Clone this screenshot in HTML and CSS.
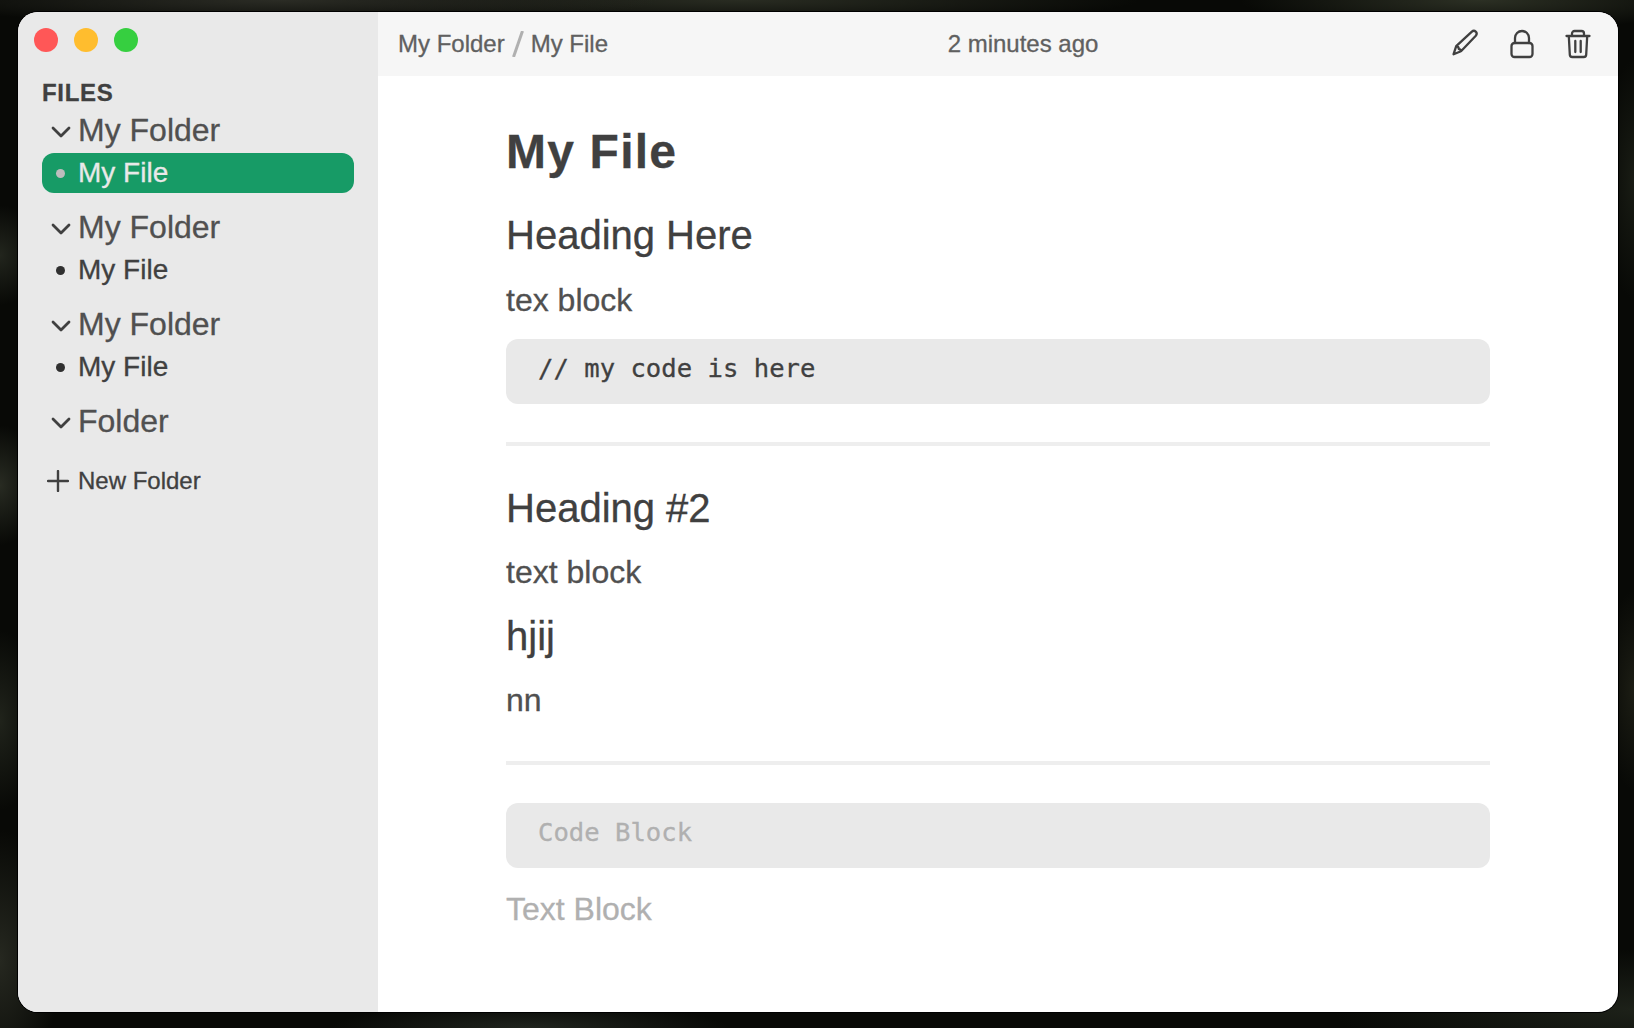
FILE: index.html
```html
<!DOCTYPE html>
<html lang="en">
<head>
<meta charset="utf-8">
<title>My File</title>
<link rel="stylesheet" href="styles.css">
</head>
<body>
<div class="window">
  <aside class="sidebar">
    <div class="lights"><span class="light close"></span><span class="light minimize"></span><span class="light expand"></span></div>
    <h2 class="files-title">FILES</h2>
    <nav class="tree">
      <section class="group">
        <div class="folder"><svg class="chevron" viewBox="0 0 20 12"><path d="M2 2l8 8 8-8"/></svg><span>My Folder</span></div>
        <div class="file selected"><i class="dot"></i><span>My File</span></div>
      </section>
      <section class="group">
        <div class="folder"><svg class="chevron" viewBox="0 0 20 12"><path d="M2 2l8 8 8-8"/></svg><span>My Folder</span></div>
        <div class="file"><i class="dot"></i><span>My File</span></div>
      </section>
      <section class="group">
        <div class="folder"><svg class="chevron" viewBox="0 0 20 12"><path d="M2 2l8 8 8-8"/></svg><span>My Folder</span></div>
        <div class="file"><i class="dot"></i><span>My File</span></div>
      </section>
      <section class="group">
        <div class="folder"><svg class="chevron" viewBox="0 0 20 12"><path d="M2 2l8 8 8-8"/></svg><span>Folder</span></div>
      </section>
    </nav>
    <div class="new-folder"><svg class="plus" viewBox="0 0 22 22"><path d="M11 1v20M1 11h20"/></svg><span>New Folder</span></div>
  </aside>
  <div class="main">
    <header class="toolbar">
      <div class="crumbs"><span>My Folder</span><svg class="slash" viewBox="0 0 12 26"><path d="M1.500 26L10.500 0"/></svg><span>My File</span></div>
      <time class="edited">2 minutes ago</time>
      <div class="actions">
        <svg class="icon pencil" viewBox="0 0 28 28"><path d="M2.600 25.200l2.600-8L20.600 2.800c3-2.600 6.600.8 4.200 3.900L10 22.200z M5.200 17.200c1.600.2 2.600 1.200 2.600 2.900 1.300-.1 2.100.6 2.200 2.100"/></svg>
        <svg class="icon lock" viewBox="0 0 24 30"><rect x="1.500" y="14" width="21" height="14" rx="3"/><path d="M5 14V9a7 7 0 0 1 14 0V14"/></svg>
        <svg class="icon trash" viewBox="0 0 26 30"><path d="M1.500 7h23M7 6.500V4.500A2.500 2.500 0 0 1 9.500 2h7A2.500 2.500 0 0 1 19 4.500v2M3.800 7l1 18.500a2.500 2.500 0 0 0 2.500 2.500h11.400a2.500 2.500 0 0 0 2.500-2.500l1-18.500M10.300 12v11M15.700 12v11"/></svg>
      </div>
    </header>
    <main class="document">
      <h1>My File</h1>
      <h3>Heading Here</h3>
      <p>tex block</p>
      <pre class="code">// my code is here</pre>
      <hr>
      <h3>Heading #2</h3>
      <p>text block</p>
      <h3>hjij</h3>
      <p>nn</p>
      <hr>
      <pre class="code placeholder">Code Block</pre>
      <p class="placeholder last">Text Block</p>
    </main>
  </div>
</div>
</body>
</html>
```

FILE: styles.css
```css
* { box-sizing: border-box; }

body {
  margin: 0;
  width: 1634px;
  height: 1028px;
  padding: 12px 16px 16px 18px;
  overflow: hidden;
  font-family: "Liberation Sans", Arial, sans-serif;
  color: #404040;
  -webkit-text-stroke: .3px currentColor;
  background:
    radial-gradient(ellipse 380px 24px at 280px 0, #2b2c25, transparent),
    radial-gradient(ellipse 400px 24px at 740px 0, #292c22, transparent),
    radial-gradient(ellipse 240px 30px at 1480px 0, #2c3024, transparent),
    radial-gradient(ellipse 40px 50px at 0 255px, #22251d, transparent),
    radial-gradient(ellipse 40px 60px at 0 485px, #282b22, transparent),
    radial-gradient(ellipse 40px 90px at 0 720px, #20231b, transparent),
    radial-gradient(ellipse 60px 130px at 0 960px, #262820, transparent),
    radial-gradient(ellipse 30px 120px at 1634px 180px, #191c14, transparent),
    radial-gradient(ellipse 30px 100px at 1634px 690px, #1c1d14, transparent),
    radial-gradient(ellipse 300px 60px at 1634px 1010px, #1d2119, transparent),
    radial-gradient(ellipse 200px 24px at 530px 1028px, #20241e, transparent),
    #080906;
}

.window {
  display: flex;
  height: 1000px;
  overflow: hidden;
  border-radius: 20px;
  background: #fff;
  box-shadow: 0 0 0 1px #000;
}

.sidebar {
  width: 360px;
  flex: none;
  padding: 16px 24px 0;
  background: #e9e9e9;
}

.lights { display: flex; gap: 16px; margin-left: -8px; }
.light { width: 24px; height: 24px; border-radius: 50%; }
.close { background: #ff5757; }
.minimize { background: #ffbd2e; }
.expand { background: #36cf40; }

.files-title {
  margin: 27px 0 0;
  font-size: 24px;
  line-height: 28px;
  letter-spacing: .7px;
}

.tree { display: flex; flex-direction: column; gap: 13px; margin-top: 2px; }
.folder { display: flex; align-items: center; height: 44px; padding-left: 8px; font-size: 32px; line-height: 43px; color: #505050; }
.folder span { margin-bottom: 1px; }
.chevron { width: 20px; height: 12px; margin: 2px 7px 0 1px; fill: none; stroke: #404040; stroke-width: 2.8; stroke-linecap: round; stroke-linejoin: round; }
.file { display: flex; align-items: center; height: 40px; padding-left: 13px; border-radius: 12px; font-size: 28px; }
.dot { width: 9px; height: 9px; margin: 0 13.500px 0 .5px; border-radius: 50%; background: #303030; }
.selected { color: #e9e9e9; background: #179b66; }
.selected .dot { background: #bdbdbd; }
.new-folder { display: flex; align-items: center; gap: 9px; margin-top: 23px; padding-left: 5px; font-size: 24px; line-height: 28px; }
.plus { width: 22px; height: 22px; fill: none; stroke: #404040; stroke-width: 2.4; stroke-linecap: round; }

.main { flex: 1; display: flex; flex-direction: column; }
.toolbar {
  display: flex;
  align-items: center;
  justify-content: space-between;
  height: 64px;
  padding: 0 27px 0 20px;
  font-size: 24px;
  color: #606060;
  background: #f6f6f6;
}
.crumbs { display: flex; align-items: center; gap: 7px; }
.slash { width: 12px; height: 26px; fill: none; stroke: #b0b0b0; stroke-width: 3; }
.actions { display: flex; align-items: center; padding-left: 13px; }
.icon { fill: none; stroke: #404040; stroke-width: 2.3; stroke-linecap: round; stroke-linejoin: round; }
.pencil { width: 28px; height: 28px; margin: 0 31px 2px 0; }
.lock { width: 24px; height: 30px; margin-right: 31px; }
.trash { width: 26px; height: 30px; }

.document { padding: 48px 128px 0; }
h1 { margin: 0; font-size: 48px; line-height: 56px; letter-spacing: 1.2px; }
h3 { margin: 0; font-size: 40px; line-height: 48px; font-weight: 400; }
p { margin: 0; font-size: 32px; line-height: 40px; color: #505050; }
h1 + h3 { margin-top: 31px; }
h3 + p { margin-top: 20px; }
h1 + h3 + p { margin-top: 21px; }
p + h3 { margin-top: 20px; }
.code {
  height: 65px;
  margin: 19px 0 0;
  padding: 14px 32px;
  border-radius: 12px;
  background: #e9e9e9;
  font: 25.6px/30px "DejaVu Sans Mono", monospace;
}
hr { height: 4px; margin: 38px 0; border: 0; background: #eee; }
p + hr { margin-top: 41px; }
.document .placeholder { color: #b0b0b0; }
.last { margin-top: 21px; }
```
